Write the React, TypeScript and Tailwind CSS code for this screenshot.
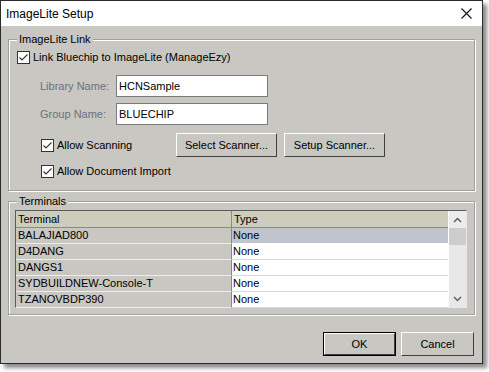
import React from 'react';

const terminals = ['BALAJIAD800', 'D4DANG', 'DANGS1', 'SYDBUILDNEW-Console-T', 'TZANOVBDP390'];

function Check({ label }: { label: string }) {
  return (
    <div className="flex items-center h-[13px]">
      <div className="w-[13px] h-[13px] border border-[#333333] bg-white flex items-center justify-center shrink-0">
        <svg width="11" height="11" viewBox="0 0 11 11">
          <path d="M1.5 5.5 L4 8 L9.5 2.5" fill="none" stroke="#333333" strokeWidth="1.1" />
        </svg>
      </div>
      <span className="ml-[3px] leading-[13px]">{label}</span>
    </div>
  );
}

function Button({ label, w, primary }: { label: string; w: string; primary?: boolean }) {
  return (
    <div className={`${w} h-[24px] ${primary ? 'border border-black' : ''}`}>
      <div className="w-full h-full border border-t-white border-l-white border-r-[#404040] border-b-[#404040] flex items-center justify-center bg-[#c8c7c1]">
        {label}
      </div>
    </div>
  );
}

function GroupBox({ title, className, children }: { title: string; className: string; children: React.ReactNode }) {
  return (
    <div className={`relative border border-[#a0a09a] shadow-[inset_1px_1px_0_white,1px_1px_0_white] ${className}`}>
      <span className="absolute left-[8px] top-[-7px] px-[2px] bg-[#c8c7c1] leading-[13px]">{title}</span>
      {children}
    </div>
  );
}

export default function App() {
  return (
    <div className="w-[489px] h-[372px] bg-white" style={{ fontFamily: '"Liberation Sans", Arial, sans-serif' }}>
      <div className="w-[483px] h-[364px] border border-[#2b2b2b] shadow-[4px_4px_4px_rgba(0,0,0,0.45)] flex flex-col text-[11px] text-black">
        {/* title bar */}
        <div className="h-[25px] bg-white flex items-center justify-between pl-[5px] pr-[10px]">
          <span className="text-[12px] pt-[1px]">ImageLite Setup</span>
          <svg width="11" height="11" viewBox="0 0 11 11">
            <path d="M0.5 0.5 L10.5 10.5 M10.5 0.5 L0.5 10.5" stroke="#111" strokeWidth="1.1" />
          </svg>
        </div>

        <div className="flex-1 bg-[#c8c7c1] px-[7px] pt-[13px]">
          {/* ImageLite Link group */}
          <GroupBox title="ImageLite Link" className="h-[152px]">
            <div className="pl-[8px] pt-[11px]">
              <Check label="Link Bluechip to ImageLite (ManageEzy)" />
            </div>
            <div className="flex items-center mt-[11px] pl-[31px]">
              <span className="w-[76px] text-[#6b6f80]">Library Name:</span>
              <div className="w-[152px] h-[22px] bg-white border border-[#7a7a7a] flex items-center pl-[2px]">HCNSample</div>
            </div>
            <div className="flex items-center mt-[6px] pl-[31px]">
              <span className="w-[76px] text-[#6b6f80]">Group Name:</span>
              <div className="w-[152px] h-[22px] bg-white border border-[#7a7a7a] flex items-center pl-[2px]">BLUECHIP</div>
            </div>
            <div className="flex items-center mt-[8px] pl-[32px]">
              <div className="w-[135px]">
                <Check label="Allow Scanning" />
              </div>
              <Button label="Select Scanner..." w="w-[101px]" />
              <div className="w-[7px]" />
              <Button label="Setup Scanner..." w="w-[101px]" />
            </div>
            <div className="pl-[32px] mt-[8px]">
              <Check label="Allow Document Import" />
            </div>
          </GroupBox>

          {/* Terminals group */}
          <GroupBox title="Terminals" className="h-[114px] mt-[10px]">
            <div className="ml-[6px] mr-[7px] mt-[8px] h-[98px] border-t border-l border-[#5a5a5a] border-r border-r-[#e8e8e8] border-b border-b-[#e8e8e8] flex bg-white">
              <div className="flex-1 flex flex-col">
                <div className="flex h-[17px] bg-[#cdcdbd] border-b border-[#8a8a80]">
                  <div className="w-[216px] border-r border-[#8a8a80] pl-[2px] leading-[16px]">Terminal</div>
                  <div className="flex-1 pl-[2px] leading-[16px]">Type</div>
                </div>
                {terminals.map((t, i) => (
                  <div key={t} className="flex h-[16px]">
                    <div className="w-[216px] bg-[#c8c7c1] border-r border-[#8a8a80] border-b border-b-[#ececec] pl-[2px] leading-[15px]">{t}</div>
                    <div className={`flex-1 pl-[1px] leading-[15px] border-b ${i === 0 ? 'bg-[#c0c4cd] border-b-white' : 'bg-white border-b-[#d8d8d8]'}`}>None</div>
                  </div>
                ))}
              </div>
              <div className="w-[17px] bg-[#e8e8e8] flex flex-col ml-[1px]">
                <div className="h-[17px] flex items-center justify-center bg-[#ececec]">
                  <svg width="9" height="6" viewBox="0 0 9 6">
                    <path d="M1 5 L4.5 1.5 L8 5" fill="none" stroke="#606060" strokeWidth="1.5" />
                  </svg>
                </div>
                <div className="h-[17px] bg-[#cdcdcd]" />
                <div className="flex-1" />
                <div className="h-[16px] flex items-center justify-center">
                  <svg width="9" height="6" viewBox="0 0 9 6">
                    <path d="M1 1 L4.5 4.5 L8 1" fill="none" stroke="#606060" strokeWidth="1.5" />
                  </svg>
                </div>
              </div>
            </div>
          </GroupBox>

          {/* footer buttons */}
          <div className="flex justify-end mt-[17px] pr-[1px]">
            <Button label="OK" w="w-[73px]" primary />
            <div className="w-[5px]" />
            <Button label="Cancel" w="w-[73px]" />
          </div>
        </div>
      </div>
    </div>
  );
}
